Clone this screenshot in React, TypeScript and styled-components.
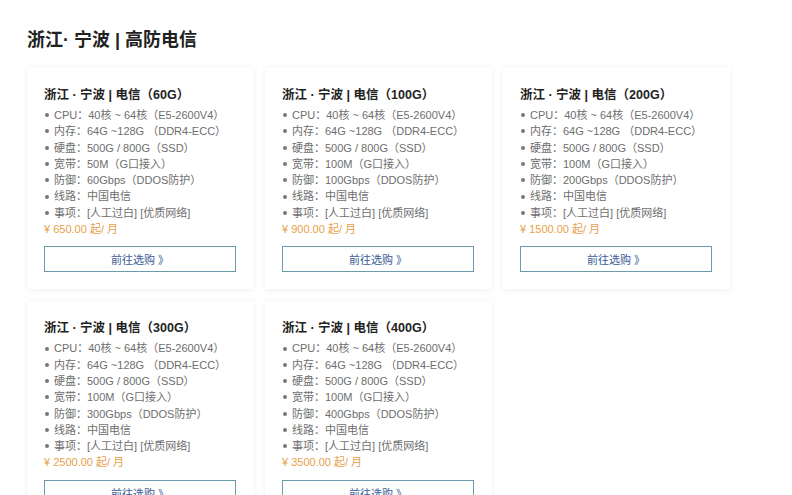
import React from "react";
import styled, { createGlobalStyle } from "styled-components";

const Global = createGlobalStyle`
  html, body { margin: 0; padding: 0; background: #ffffff; }
  body { font-family: "Liberation Sans", Arial, "Noto Sans CJK SC", sans-serif; }
`;

const Page = styled.div`
  padding: 28px 0 0 27px;
`;

const Heading = styled.h1`
  margin: 0 0 16px 0;
  font-size: 18px;
  line-height: 24px;
  font-weight: 700;
  color: #222;
`;

const Grid = styled.div`
  display: grid;
  grid-template-columns: repeat(3, 227px);
  column-gap: 11px;
  row-gap: 12px;
`;

const Card = styled.div`
  background: #fff;
  box-shadow: 0 1px 6px rgba(0, 0, 0, 0.07);
  padding: 18px 18px 17px 17px;
  display: flex;
  flex-direction: column;
`;

const CardTitle = styled.div`
  font-size: 12.5px;
  line-height: 18px;
  font-weight: 700;
  color: #222;
  margin-bottom: 3px;
`;

const SpecList = styled.ul`
  list-style: none;
  margin: 0;
  padding: 0;
`;

const Spec = styled.li`
  font-size: 11px;
  line-height: 16.3px;
  color: #6e6e6e;
  display: flex;
  align-items: center;
  &::before {
    content: "";
    width: 4px;
    height: 4px;
    border-radius: 50%;
    background: #777;
    margin: 0 5px 0 1px;
    flex: none;
  }
`;

const Price = styled.div`
  font-size: 11px;
  line-height: 16.3px;
  color: #e8a04a;
  margin-bottom: 9px;
`;

const BuyButton = styled.button`
  height: 26px;
  width: 100%;
  background: #fff;
  border: 1px solid #6a9cae;
  color: #3a5a98;
  font-family: inherit;
  font-size: 11px;
  cursor: pointer;
  padding: 0;
`;

type Plan = {
  size: string;
  bw: string;
  def: string;
  price: string;
};

const plans: Plan[] = [
  { size: "60G", bw: "50M", def: "60Gbps", price: "650.00" },
  { size: "100G", bw: "100M", def: "100Gbps", price: "900.00" },
  { size: "200G", bw: "100M", def: "200Gbps", price: "1500.00" },
  { size: "300G", bw: "100M", def: "300Gbps", price: "2500.00" },
  { size: "400G", bw: "100M", def: "400Gbps", price: "3500.00" },
];

export default function App() {
  return (
    <>
      <Global />
      <Page>
        <Heading>浙江· 宁波 | 高防电信</Heading>
        <Grid>
          {plans.map((p) => (
            <Card key={p.size}>
              <CardTitle>浙江 · 宁波 | 电信（{p.size}）</CardTitle>
              <SpecList>
                <Spec>CPU：40核 ~ 64核（E5-2600V4）</Spec>
                <Spec>内存：64G ~128G （DDR4-ECC）</Spec>
                <Spec>硬盘：500G / 800G（SSD）</Spec>
                <Spec>宽带：{p.bw}（G口接入）</Spec>
                <Spec>防御：{p.def}（DDOS防护）</Spec>
                <Spec>线路：中国电信</Spec>
                <Spec>事项：[人工过白] [优质网络]</Spec>
              </SpecList>
              <Price>¥ {p.price} 起/ 月</Price>
              <BuyButton>前往选购 》</BuyButton>
            </Card>
          ))}
        </Grid>
      </Page>
    </>
  );
}
